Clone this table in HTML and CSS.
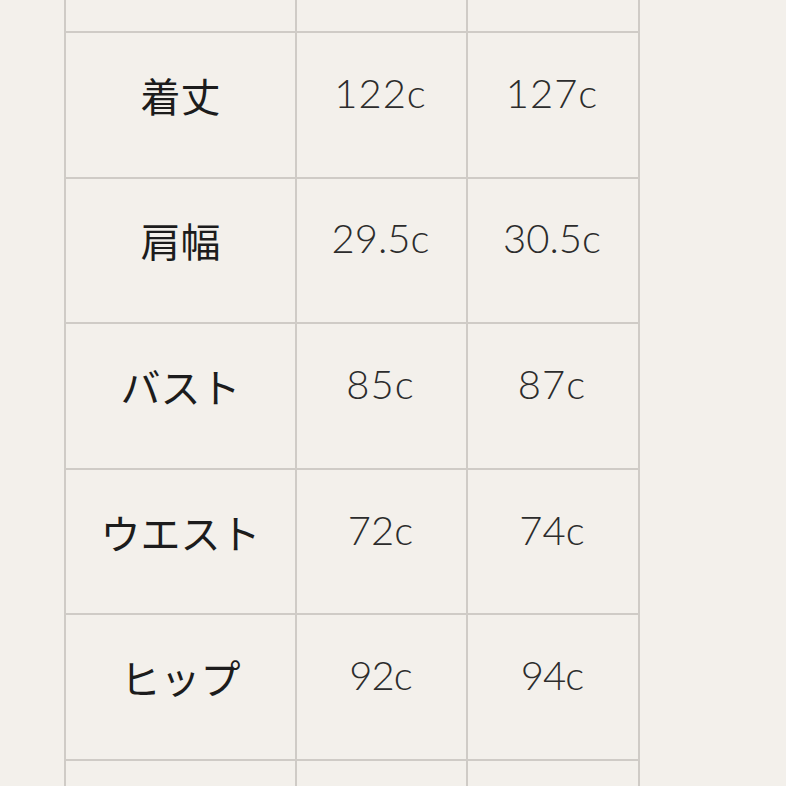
FILE: index.html
```html
<!DOCTYPE html>
<html lang="ja">
<head>
<meta charset="utf-8">
<link rel="stylesheet" href="styles.css">
</head>
<body>
<div class="sheet">
  <div class="grid">
    <div class="cell top"></div><div class="cell top"></div><div class="cell top"></div>
    <div class="cell label">着丈</div><div class="cell num n-wide">122c</div><div class="cell num n-wide">127c</div>
    <div class="cell label">肩幅</div><div class="cell num">29.5c</div><div class="cell num">30.5c</div>
    <div class="cell label">バスト</div><div class="cell num n-wide">85c</div><div class="cell num n-wide">87c</div>
    <div class="cell label">ウエスト</div><div class="cell num">72c</div><div class="cell num">74c</div>
    <div class="cell label">ヒップ</div><div class="cell num n-thin">92c</div><div class="cell num n-thin">94c</div>
    <div class="cell bottom"></div><div class="cell bottom"></div><div class="cell bottom"></div>
  </div>
</div>
</body>
</html>
```

FILE: styles.css
```css
html, body {
  margin: 0;
  padding: 0;
  background: #f3f0eb;
  overflow: hidden;
}
.sheet {
  height: 786px;
  padding-left: 64px;
}
.grid {
  display: grid;
  grid-template-columns: 231px 171px 172px;
  grid-template-rows: 33px repeat(5, 145.6px) 60px;
  width: 574px;
  border-left: 2px solid #cfcbc6;
}
.cell {
  box-sizing: border-box;
  border-right: 2px solid #cfcbc6;
  border-bottom: 2px solid #cfcbc6;
  display: flex;
  align-items: center;
  justify-content: center;
  padding-bottom: 14px;
}
.cell.bottom {
  border-bottom: none;
}
.label {
  font-family: "Noto Sans CJK JP", "Noto Sans", sans-serif;
  font-size: 40px;
  color: #1c1c1c;
  padding-bottom: 20px;
}
.num {
  font-family: "Lato", "Liberation Sans", sans-serif;
  font-weight: 300;
  font-size: 40px;
  color: #2c2c2c;
  padding-bottom: 24px;
  padding-right: 2px;
}
.n-wide {
  letter-spacing: 1px;
}
.n-thin {
  letter-spacing: -1px;
}
```
